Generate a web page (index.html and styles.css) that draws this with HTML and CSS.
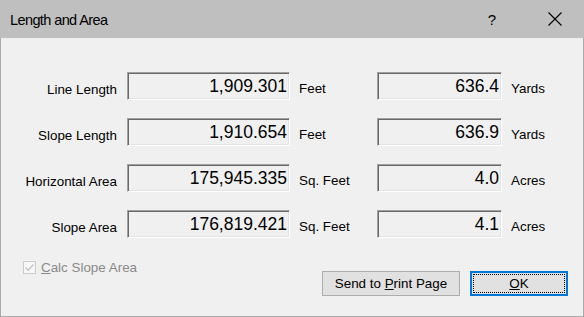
FILE: index.html
```html
<!DOCTYPE html>
<html>
<head>
<meta charset="utf-8">
<link rel="stylesheet" href="styles.css">
</head>
<body>
<div class="window">
  <div class="titlebar">
    <span class="title">Length and Area</span>
    <span class="help">?</span>
    <svg class="close" width="14" height="14" viewBox="0 0 14 14"><path d="M0.5 0.5 L13.5 13.5 M13.5 0.5 L0.5 13.5" stroke="#000" stroke-width="1.1" fill="none"/></svg>
  </div>
  <div class="content">
    <div class="grid">
      <div class="label">Line Length</div>
      <div class="edit">1,909.301</div>
      <div class="unit">Feet</div>
      <div class="edit">636.4</div>
      <div class="unit2">Yards</div>

      <div class="label">Slope Length</div>
      <div class="edit">1,910.654</div>
      <div class="unit">Feet</div>
      <div class="edit">636.9</div>
      <div class="unit2">Yards</div>

      <div class="label">Horizontal Area</div>
      <div class="edit">175,945.335</div>
      <div class="unit">Sq. Feet</div>
      <div class="edit">4.0</div>
      <div class="unit2">Acres</div>

      <div class="label">Slope Area</div>
      <div class="edit">176,819.421</div>
      <div class="unit">Sq. Feet</div>
      <div class="edit">4.1</div>
      <div class="unit2">Acres</div>
    </div>
    <div class="bottom">
      <div class="check">
        <span class="box"><svg width="11" height="11" viewBox="0 0 11 11"><path d="M1.5 5.5 L4.2 8.2 L9.5 2.5" stroke="#c4c4c4" stroke-width="1.3" fill="none"/></svg></span>
        <span class="checklabel"><u>C</u>alc Slope Area</span>
      </div>
      <div class="buttons">
        <div class="btn send"><span>Send to <u>P</u>rint Page</span></div>
        <div class="btn ok"><span class="focus"><span><u>O</u>K</span></span></div>
      </div>
    </div>
  </div>
</div>
</body>
</html>
```
FILE: styles.css
```css
html, body {
  margin: 0;
  padding: 0;
  background: #f0f0f0;
}
.window {
  width: 584px;
  height: 317px;
  box-sizing: border-box;
  border: 1px solid #aaaaaa;
  border-top: none;
  background: #f0f0f0;
  font-family: "Liberation Sans", Arial, sans-serif;
  color: #000;
  display: flex;
  flex-direction: column;
}
.titlebar {
  height: 38px;
  margin: 0 -1px;
  background: #bfbfbf;
  display: flex;
  align-items: center;
  position: relative;
}
.title {
  font-size: 14.5px;
  letter-spacing: -0.6px;
  margin-left: 10px;
  margin-top: 1px;
  flex: 1;
}
.help {
  font-size: 15px;
  margin-right: 52px;
  margin-top: 1px;
}
.close {
  margin-right: 22px;
}
.content {
  flex: 1;
  display: flex;
  flex-direction: column;
}
.grid {
  display: grid;
  grid-template-columns: 126px 163px 87px 125px 1fr;
  grid-auto-rows: 28px;
  row-gap: 18px;
  margin-top: 34px;
  font-size: 13.4px;
}
.label {
  text-align: right;
  padding-right: 10px;
  align-self: center;
  padding-top: 7px;
}
.unit, .unit2 {
  padding-left: 9px;
  align-self: center;
  padding-top: 5px;
}
.edit {
  box-sizing: border-box;
  border: 1px solid;
  border-color: #a0a0a0 #ffffff #ffffff #a0a0a0;
  box-shadow: inset 1px 1px 0 #696969, inset -1px -1px 0 #e3e3e3;
  background: #f0f0f0;
  font-size: 17.5px;
  text-align: right;
  padding-right: 2px;
  line-height: 26px;
  color: #000;
}
.bottom {
  display: flex;
  justify-content: space-between;
  align-items: flex-start;
  padding: 0 15px 0 22px;
}
.check {
  margin-top: 22px;
  display: flex;
  align-items: center;
  color: #8a8a8a;
  font-size: 13.4px;
}
.box {
  width: 13px;
  height: 13px;
  box-sizing: border-box;
  border: 1px solid #cccccc;
  background: #f7f7f7;
  display: flex;
  align-items: center;
  justify-content: center;
  margin-right: 5px;
}
.box svg { display: block; }
.buttons {
  margin-top: 33px;
  display: flex;
  gap: 10px;
}
.btn {
  box-sizing: border-box;
  height: 25px;
  background: #e1e1e1;
  border: 1px solid #adadad;
  font-size: 13.4px;
  display: flex;
  align-items: center;
  justify-content: center;
}
.send {
  width: 138px;
}
.ok {
  width: 98px;
  border: 2px solid #0078d7;
  padding: 1px;
}
.focus {
  flex: 1;
  align-self: stretch;
  border: 1px dotted #000;
  display: flex;
  align-items: center;
  justify-content: center;
}
```
